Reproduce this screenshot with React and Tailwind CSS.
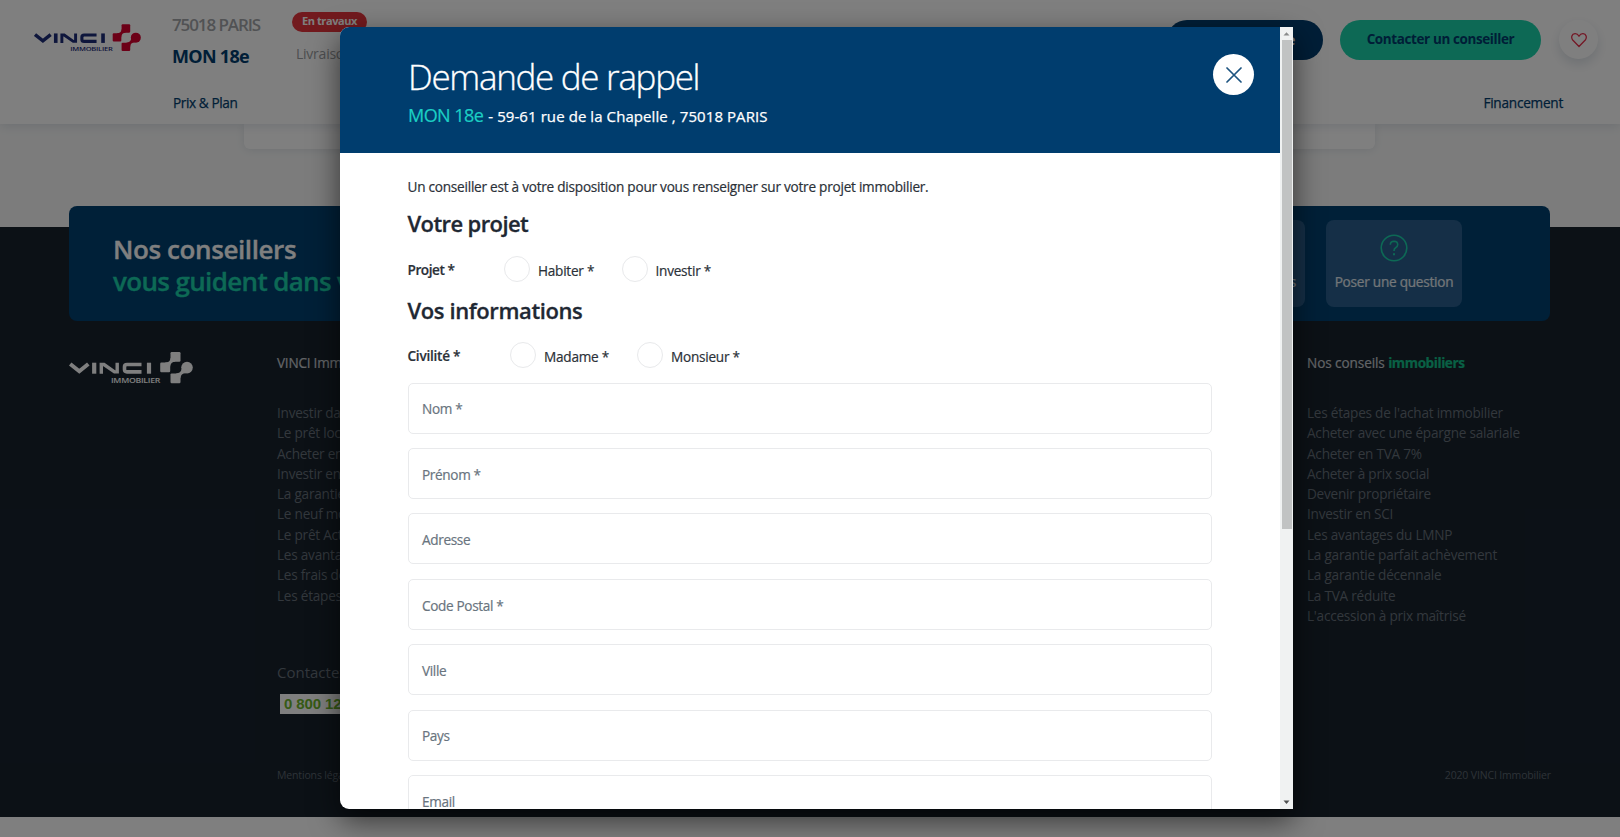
import React from "react";

const leftLinks = [
  "Investir dans le neuf", "Le prêt locatif social", "Acheter en VEFA", "Investir en LMNP",
  "La garantie décennale", "Le neuf moins cher", "Le prêt Action Logement",
  "Les avantages du neuf", "Les frais de notaire", "Les étapes de l'achat",
];
const rightLinks = [
  "Les étapes de l'achat immobilier", "Acheter avec une épargne salariale", "Acheter en TVA 7%",
  "Acheter à prix social", "Devenir propriétaire", "Investir en SCI", "Les avantages du LMNP",
  "La garantie parfait achèvement", "La garantie décennale", "La TVA réduite",
  "L'accession à prix maîtrisé",
];
const fields = ["Nom *", "Prénom *", "Adresse", "Code Postal *", "Ville", "Pays", "Email"];

function Logo({ className, main, cross }) {
  return (
    <svg viewBox="0 0 124 32" className={className} fill="none">
      <g stroke={main} strokeWidth="3.6">
        <path d="M1.200 12 L10.300 19.200 L19.300 12" strokeWidth="4" />
        <path d="M25.200 10.700 V21.700" strokeWidth="4.200" />
        <path d="M32.300 21.700 V12.500 H35 L45.500 19.900 H48.200 V10.700" strokeWidth="3.400" />
        <path d="M72.500 12.500 H58 Q55.500 12.500 55.500 14.800 V17.600 Q55.500 19.900 58 19.900 H72.500" />
        <path d="M80 10.700 V21.700" strokeWidth="4.200" />
      </g>
      <text x="42" y="31.200" textLength="49" lengthAdjust="spacingAndGlyphs" fontSize="7" fontWeight="600" fill={main} fontFamily="Open Sans, sans-serif">IMMOBILIER</text>
      <g fill={cross}>
        <rect x="101.500" y="0" width="10" height="9.800" rx="1.200" />
        <rect x="91.200" y="10.600" width="10" height="9.600" rx="1.200" />
        <rect x="101.500" y="21.400" width="10" height="9.800" rx="1.200" />
        <circle cx="118" cy="15.600" r="5.800" />
        <path d="M101.500 6 Q101.300 10.600 96 10.600 L101 15 Q101.500 10 106.500 9.600 Z" />
        <path d="M112.600 17 Q112 21 107 21.600 L111.500 26 Q111.600 21.500 117 21.300 Z" />
      </g>
    </svg>
  );
}

function Header() {
  return (
    <header className="relative z-10 flex h-[124px] bg-white shadow-[0_2px_10px_rgba(0,40,80,0.12)]">
      <Logo className="mt-[24px] ml-[34px] h-[28px] w-[107px] shrink-0" main="#1d2c78" cross="#d8002f" />
      <div className="ml-[31px] w-[118px] shrink-0">
        <div className="mt-[12px] text-[17px] leading-[25px] font-semibold tracking-[-1.1px] text-[#a3a5a8]">75018 PARIS</div>
        <div className="mt-[7px] text-[18px] leading-[25px] font-bold tracking-[-0.7px] text-[#003d6e]">MON 18e</div>
        <a className="mt-[24px] block pl-[1px] leading-[20px] tracking-[-0.4px] text-[#003d6e] [-webkit-text-stroke:0.25px]">Prix &amp; Plan</a>
      </div>
      <div className="ml-[2px] shrink-0">
        <div className="mt-[12px] flex h-[20px] w-[75px] items-center justify-center rounded-full bg-[#e5353c] pb-px text-[11px] font-bold tracking-[-0.4px] text-white">En travaux</div>
        <div className="mt-[12px] pl-[4px] text-[14px] leading-[20px] text-[#9b9da0]">Livraison 2022</div>
      </div>
      <div className="mr-[22px] ml-auto flex flex-col">
        <div className="flex pt-[20px]">
          <div className="flex h-[40px] w-[156px] items-center justify-end rounded-full bg-[#003d6e] pr-[28px] text-[13.500px] font-bold text-white">Être rappelé·e</div>
          <div className="ml-[17px] flex h-[40px] w-[201px] items-center justify-center rounded-full bg-[#1bd2ab] pb-[2px] text-[13.500px] font-bold tracking-[-0.4px] text-[#003d6e]">Contacter un conseiller</div>
          <div className="ml-[18px] flex size-[39px] items-center justify-center rounded-full bg-white shadow-[0_5px_12px_rgba(0,40,80,0.14)]">
            <svg viewBox="0 0 16 16" className="size-[16px]" fill="none" stroke="#e8304c" strokeWidth="1.300" strokeLinejoin="round">
              <path d="M8 14.500 L1.700 8 C-0.200 5.600 0.700 2 4 1.700 C6.200 1.600 7.300 3 8 4.300 C8.700 3 9.800 1.600 12 1.700 C15.300 2 16.200 5.600 14.300 8 Z" />
            </svg>
          </div>
        </div>
        <a className="mt-[33px] mr-[35px] self-end leading-[20px] text-[#003d6e] [-webkit-text-stroke:0.25px]">Financement</a>
      </div>
    </header>
  );
}

function Banner() {
  return (
    <section className="mx-[69px] flex h-[115px] w-[1481px] -translate-y-[21px] rounded-lg bg-[#004071]">
      <h2 className="mt-[27px] ml-[44px] text-[26px] leading-[32px] font-semibold tracking-[-0.4px] whitespace-nowrap text-white [-webkit-text-stroke:0.3px]">
        Nos conseillers
        <br />
        <span className="tracking-[-0.650px] text-[#1bd2ab]">vous guident dans votre projet</span>
      </h2>
      <div className="mt-[14px] mr-[88px] ml-auto flex gap-[21px]">
        {["Trouver nos biens", "Poser une question"].map((label) => (
          <div key={label} className="flex h-[87px] w-[136px] flex-col items-center rounded-lg bg-[#2a5f8e] pt-[14px] leading-[20px] text-white/85 [-webkit-text-stroke:0.2px]">
            <svg viewBox="0 0 28 28" className="size-[28px]" fill="none" stroke="#1bd2ab" strokeWidth="1.600">
              <circle cx="14" cy="14" r="12.800" />
              <path d="M10.300 10.700 Q10.500 7.300 14 7.300 Q17.700 7.400 17.700 10.700 Q17.600 12.700 15.600 13.700 Q14 14.500 14 17" />
              <path d="M14 19.300 V21.300" strokeWidth="2" />
            </svg>
            <span className="mt-[10px] min-w-[118px] text-right whitespace-nowrap">{label}</span>
          </div>
        ))}
      </div>
    </section>
  );
}

function Links({ items }) {
  return (
    <ul className="mt-[30px] leading-[20.300px] whitespace-nowrap text-[#66707a]">
      {items.map((t) => <li key={t}>{t}</li>)}
    </ul>
  );
}

function Footer() {
  return (
    <footer className="h-[590px] bg-[#18222d]">
      <Banner />
      <div className="flex h-[393px]">
        <Logo className="mt-[10px] ml-[69px] h-[32px] w-[124px] shrink-0" main="#fff" cross="#fff" />
        <div className="ml-[84px] w-[300px] pt-[11px]">
          <h3 className="leading-[20px] text-[#c5c9cd] [-webkit-text-stroke:0.2px]">VINCI Immobilier</h3>
          <Links items={leftLinks} />
          <div className="mt-[55px] text-[15px] leading-[22px] tracking-normal text-[#66707a]">Contactez-nous</div>
          <div className="mt-[11px] ml-[3px] flex h-[20px] items-center bg-white pl-[4px] font-['Liberation_Sans',sans-serif] text-[15px] font-bold tracking-[-0.1px] whitespace-nowrap text-[#6db52c]">0 800 124 124</div>
        </div>
        <div className="mr-[70px] ml-auto w-[243px] pt-[11px]">
          <h3 className="leading-[20px] tracking-[-0.100px] text-[#c5c9cd] [-webkit-text-stroke:0.2px]">Nos conseils <b className="tracking-[-0.450px] text-[#12c08a]">immobiliers</b></h3>
          <Links items={rightLinks} />
        </div>
      </div>
      <div className="mt-[32px] flex justify-between pr-[69px] pl-[277px] text-[10.500px] leading-[16px] tracking-[-0.150px] text-[#5c6670]">
        <span>Mentions légales</span>
        <span>2020 VINCI Immobilier</span>
      </div>
    </footer>
  );
}

function Radio({ label, className }) {
  return (
    <label className={"flex items-center " + className}>
      <span className="size-[26px] shrink-0 rounded-full border border-[#e8e9eb] bg-white" />
      <span className="mt-[3px] ml-[8px] whitespace-nowrap">{label}</span>
    </label>
  );
}

function Modal() {
  return (
    <div className="absolute top-[27px] left-[340px] flex h-[782px] w-[953px] overflow-hidden rounded-l-[9px] bg-white">
      <div className="w-[940px] overflow-hidden text-[#2b3138]">
        <div className="flex h-[126px] bg-[#003d6e] pl-[68px] text-white">
          <div>
            <h1 className="mt-[27px] text-[35px] leading-[46px] font-light tracking-[-1.300px] whitespace-nowrap [-webkit-text-stroke:0.3px]">Demande de rappel</h1>
            <div className="mt-px flex items-baseline whitespace-nowrap">
              <span className="text-[18px] leading-[28px] tracking-[-0.550px] text-[#1ccfc4] [-webkit-text-stroke:0.2px]">MON 18e</span>
              <span className="ml-[5px] text-[15px] tracking-[0.080px] [-webkit-text-stroke:0.25px]">- 59-61 rue de la Chapelle , 75018 PARIS</span>
            </div>
          </div>
          <button className="mt-[27px] mr-[26px] ml-auto flex size-[41px] items-center justify-center rounded-full bg-white">
            <svg viewBox="0 0 16 16" className="size-[16px]" stroke="#1d5480" strokeWidth="1.700" strokeLinecap="round">
              <path d="M1 1 L15 15 M15 1 L1 15" />
            </svg>
          </button>
        </div>
        <div className="pl-[67.500px] leading-[20px] [-webkit-text-stroke:0.2px]">
          <p className="pt-[24px] whitespace-nowrap">Un conseiller est à votre disposition pour vous renseigner sur votre projet immobilier.</p>
          <h2 className="mt-[10px] text-[22px] leading-[32px] font-semibold tracking-[-0.600px] text-[#1f2833] [-webkit-text-stroke:0.3px]">Votre projet</h2>
          <div className="mt-[17px] flex h-[26px] items-center">
            <b className="w-[96.500px] pt-[2px] font-semibold tracking-[-0.450px]">Projet *</b>
            <Radio label="Habiter *" className="w-[117.500px]" />
            <Radio label="Investir *" className="" />
          </div>
          <h2 className="mt-[12px] text-[22px] leading-[32px] font-semibold tracking-[-0.400px] text-[#1f2833] [-webkit-text-stroke:0.3px]">Vos informations</h2>
          <div className="mt-[16px] flex h-[26px] items-center">
            <b className="w-[102.500px] pt-px font-semibold tracking-[-0.250px]">Civilité *</b>
            <Radio label="Madame *" className="w-[127px]" />
            <Radio label="Monsieur *" className="" />
          </div>
          <div className="mt-[14.600px] ml-[0.500px] flex flex-col gap-[14.400px]">
            {fields.map((f) => (
              <div key={f} className="flex h-[51px] w-[804px] shrink-0 items-center rounded-[5px] border border-[#e9eaec] pt-[2.500px] pl-[13px] tracking-[-0.350px] text-[#69747e]">{f}</div>
            ))}
          </div>
        </div>
      </div>
      <div className="flex w-[13px] flex-col items-center bg-[#f0f2f2]">
        <svg viewBox="0 0 13 13" className="size-[13px] shrink-0"><path d="M3.500 8.500 H9.500 L6.500 5.200 Z" fill="#8a8c8c" /></svg>
        <div className="h-[489px] w-[10px] bg-[#c1c3c3]" />
        <svg viewBox="0 0 13 13" className="mt-auto size-[13px] shrink-0"><path d="M3.500 4.500 H9.500 L6.500 8 Z" fill="#4e5050" /></svg>
      </div>
    </div>
  );
}

export default function App() {
  return (
    <div className="relative h-[837px] w-[1620px] overflow-hidden bg-white font-['Open_Sans',sans-serif] text-[13.600px] tracking-[-0.240px]">
      <Header />
      <main className="h-[103px] bg-[#f8f9f9]">
        <div className="ml-[244px] h-[25px] w-[1131px] rounded-b-[6px] bg-white shadow-[0_1px_8px_rgba(0,40,80,0.1)]" />
      </main>
      <Footer />
      <div className="absolute inset-0 z-20 bg-black/50">
        <div className="absolute top-[27px] left-[340px] h-[782px] w-[953px] rounded-l-[9px] shadow-[0_11px_30px_rgba(0,0,0,0.6)]" />
        <Modal />
      </div>
    </div>
  );
}
